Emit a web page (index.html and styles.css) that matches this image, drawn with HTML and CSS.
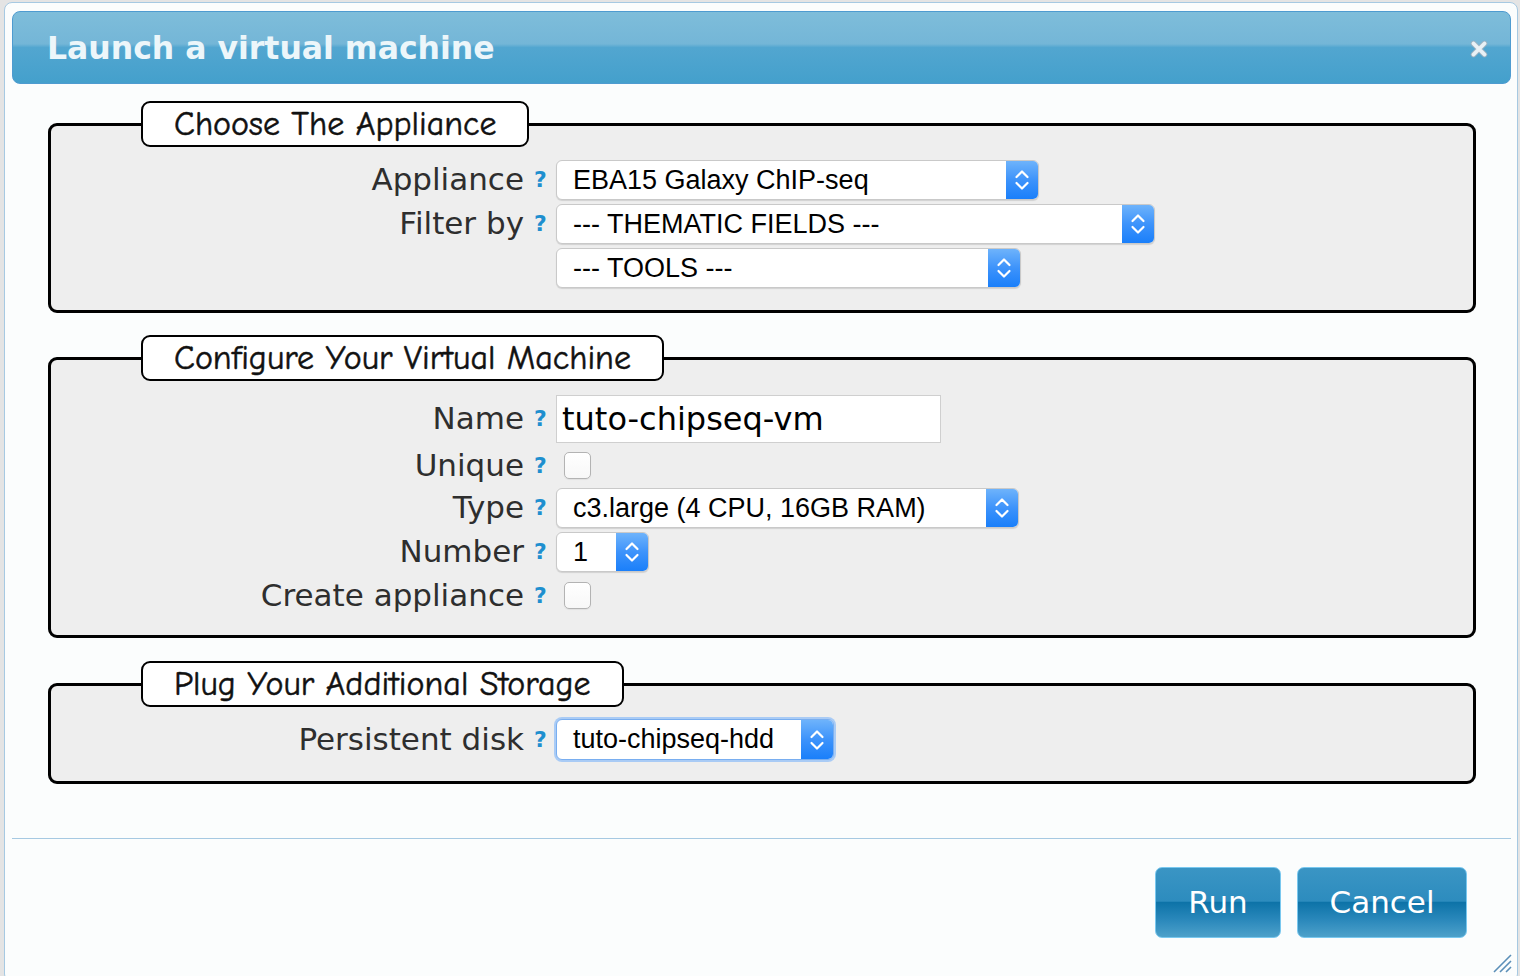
FILE: index.html
```html
<!DOCTYPE html>
<html>
<head>
<meta charset="utf-8">
<title>Launch a virtual machine</title>
<link rel="stylesheet" href="styles.css">
</head>
<body>
<div class="dialog">
  <div class="titlebar">
    <span class="title">Launch a virtual machine</span>
    <svg class="close" width="18" height="18" viewBox="0 0 18 18">
      <path d="M3.5 3.5 L14.5 14.5 M14.5 3.5 L3.5 14.5" stroke="#9fb4c2" stroke-width="5.4" stroke-linecap="round"/>
      <path d="M3.5 3.5 L14.5 14.5 M14.5 3.5 L3.5 14.5" stroke="#e9f1f6" stroke-width="3.8" stroke-linecap="round"/>
    </svg>
  </div>

  <fieldset class="group group-appliance">
    <legend>Choose The Appliance</legend>
    <div class="row">
      <span class="label">Appliance</span><span class="help">?</span>
      <div class="select w-appliance"><span class="value">EBA15 Galaxy ChIP-seq</span><span class="arrow"><svg width="16" height="24" viewBox="0 0 16 24"><path d="M2.5 9 L8 3.5 L13.5 9 M2.5 15 L8 20.5 L13.5 15" fill="none" stroke="#fff" stroke-width="2.2" stroke-linecap="round" stroke-linejoin="round"/></svg></span></div>
    </div>
    <div class="row">
      <span class="label">Filter by</span><span class="help">?</span>
      <div class="select w-thematic"><span class="value">--- THEMATIC FIELDS ---</span><span class="arrow"><svg width="16" height="24" viewBox="0 0 16 24"><path d="M2.5 9 L8 3.5 L13.5 9 M2.5 15 L8 20.5 L13.5 15" fill="none" stroke="#fff" stroke-width="2.2" stroke-linecap="round" stroke-linejoin="round"/></svg></span></div>
    </div>
    <div class="row">
      <span class="label"></span><span class="help blank"></span>
      <div class="select w-tools"><span class="value">--- TOOLS ---</span><span class="arrow"><svg width="16" height="24" viewBox="0 0 16 24"><path d="M2.5 9 L8 3.5 L13.5 9 M2.5 15 L8 20.5 L13.5 15" fill="none" stroke="#fff" stroke-width="2.2" stroke-linecap="round" stroke-linejoin="round"/></svg></span></div>
    </div>
  </fieldset>

  <fieldset class="group group-vm">
    <legend>Configure Your Virtual Machine</legend>
    <div class="row row-name">
      <span class="label">Name</span><span class="help">?</span>
      <input class="text" type="text" value="tuto-chipseq-vm">
    </div>
    <div class="row row-unique">
      <span class="label">Unique</span><span class="help">?</span>
      <span class="checkbox"></span>
    </div>
    <div class="row">
      <span class="label">Type</span><span class="help">?</span>
      <div class="select w-type"><span class="value">c3.large (4 CPU, 16GB RAM)</span><span class="arrow"><svg width="16" height="24" viewBox="0 0 16 24"><path d="M2.5 9 L8 3.5 L13.5 9 M2.5 15 L8 20.5 L13.5 15" fill="none" stroke="#fff" stroke-width="2.2" stroke-linecap="round" stroke-linejoin="round"/></svg></span></div>
    </div>
    <div class="row">
      <span class="label">Number</span><span class="help">?</span>
      <div class="select w-number"><span class="value">1</span><span class="arrow"><svg width="16" height="24" viewBox="0 0 16 24"><path d="M2.5 9 L8 3.5 L13.5 9 M2.5 15 L8 20.5 L13.5 15" fill="none" stroke="#fff" stroke-width="2.2" stroke-linecap="round" stroke-linejoin="round"/></svg></span></div>
    </div>
    <div class="row row-create">
      <span class="label">Create appliance</span><span class="help">?</span>
      <span class="checkbox"></span>
    </div>
  </fieldset>

  <fieldset class="group group-storage">
    <legend>Plug Your Additional Storage</legend>
    <div class="row row-disk">
      <span class="label">Persistent disk</span><span class="help">?</span>
      <div class="select w-disk focused"><span class="value">tuto-chipseq-hdd</span><span class="arrow"><svg width="16" height="24" viewBox="0 0 16 24"><path d="M2.5 9 L8 3.5 L13.5 9 M2.5 15 L8 20.5 L13.5 15" fill="none" stroke="#fff" stroke-width="2.2" stroke-linecap="round" stroke-linejoin="round"/></svg></span></div>
    </div>
  </fieldset>

  <div class="divider"></div>

  <div class="buttons">
    <button class="btn btn-run">Run</button>
    <button class="btn btn-cancel">Cancel</button>
  </div>

  <svg class="resize" width="22" height="22" viewBox="0 0 22 22">
    <path d="M21 4 L4 21 M21 10 L10 21 M21 16 L16 21" stroke="#5b8fb8" stroke-width="1.6"/>
  </svg>
</div>
</body>
</html>
```

FILE: styles.css
```css
html, body {
  margin: 0;
  padding: 0;
}

body {
  background: #e4e4e4;
  font-family: "DejaVu Sans", "Liberation Sans", sans-serif;
  padding: 2px 0 0 4px;
  height: 976px;
  box-sizing: border-box;
  overflow: hidden;
}

.dialog {
  position: relative;
  box-sizing: border-box;
  width: 1514px;
  height: 980px;
  background: #fbfdfd;
  border: 1px solid #a6c9e2;
  border-radius: 8px;
  padding: 8px 6px 0 7px;
}

.titlebar {
  box-sizing: border-box;
  height: 73px;
  border: 1px solid #4e9bd0;
  border-radius: 8px;
  background: linear-gradient(to bottom, #7ebdda 0%, #74b6d7 45%, #52a6d0 50%, #44a0cc 100%);
  display: flex;
  align-items: center;
  justify-content: space-between;
  padding: 0 22px 0 34px;
}

.title {
  font-family: "DejaVu Sans", sans-serif;
  font-weight: bold;
  font-size: 31.5px;
  color: #ecf6fa;
}

.close {
  display: block;
  margin-top: 2px;
}

.group {
  margin: 17px 35px 0 36px;
  padding: 13px 0 22px 0;
  border: 3px solid #000;
  border-radius: 9px;
  background: #eeeeee;
  min-width: 0;
}

.group-vm {
  margin-top: 22px;
  padding: 14px 0 20px 0;
}

.group-storage {
  margin-top: 23px;
  padding: 12px 0 21px 0;
}

legend {
  box-sizing: border-box;
  height: 46px;
  margin-left: 90px;
  padding: 0 31px 0 31px;
  border: 2px solid #000;
  border-radius: 9px;
  background: #fff;
  font-family: "Comic Sans MS", "Comic Neue", cursive;
  font-size: 34px;
  line-height: 42px;
  color: #111;
  -webkit-text-stroke: 0.5px #111;
  white-space: nowrap;
}

.row {
  display: flex;
  align-items: center;
  height: 40px;
  margin-bottom: 4px;
}

.row:last-child {
  margin-bottom: 0;
}

.row-name {
  height: 48px;
}

.row-unique {
  height: 37px;
}

.row-create {
  height: 39px;
}

.row-disk {
  height: 41px;
}

.label {
  width: 473px;
  flex: none;
  text-align: right;
  font-size: 31px;
  color: #2e2e2e;
  white-space: nowrap;
  margin-top: -2px;
}

.help {
  width: 12px;
  flex: none;
  margin: 0 10px;
  font-weight: bold;
  font-size: 22px;
  color: #1e8fcf;
  text-align: center;
  line-height: 1;
}

.select {
  box-sizing: border-box;
  height: 40px;
  display: flex;
  align-items: stretch;
  background: #fff;
  border: 1px solid #c9c9c9;
  border-radius: 6px;
  box-shadow: 0 1px 1px rgba(0, 0, 0, 0.12);
  overflow: hidden;
}

.select .value {
  flex: 1;
  padding-left: 16px;
  font-family: "Liberation Sans", Arial, sans-serif;
  font-size: 27px;
  line-height: 38px;
  color: #000;
  white-space: nowrap;
}

.select .arrow {
  width: 32px;
  flex: none;
  display: flex;
  align-items: center;
  justify-content: center;
  background: linear-gradient(to bottom, #6eb3fb 0%, #3d93fb 50%, #1a7ffa 100%);
}

.w-appliance { width: 483px; }
.w-thematic { width: 599px; }
.w-tools { width: 465px; }
.w-type { width: 463px; }
.w-number { width: 93px; }
.w-disk { width: 278px; height: 41px; }

.focused {
  border-color: #79aef0;
  box-shadow: 0 0 0 2px #a9cbf5;
}

.text {
  box-sizing: border-box;
  width: 385px;
  height: 48px;
  margin: 0;
  border: 1px solid #cfcfcf;
  background: #fff;
  padding: 0 5px;
  font-family: "DejaVu Sans", sans-serif;
  font-size: 32px;
  color: #000;
  outline: none;
}

.checkbox {
  box-sizing: border-box;
  width: 27px;
  height: 27px;
  margin-left: 8px;
  border: 1px solid #b3b3b3;
  border-radius: 5px;
  background: linear-gradient(to bottom, #ffffff, #f7f7f7);
  box-shadow: 0 1px 1px rgba(0, 0, 0, 0.06);
}

.divider {
  height: 1px;
  background: #a6c9e2;
  margin-top: 54px;
}

.buttons {
  display: flex;
  justify-content: flex-end;
  gap: 16px;
  margin: 28px 44px 0 0;
}

.btn {
  box-sizing: border-box;
  height: 71px;
  padding: 0;
  border: 1px solid #79c8ef;
  border-radius: 7px;
  background: linear-gradient(to bottom, #3a95c4 0%, #2d8cbe 48%, #0d73a8 50%, #2a88bb 75%, #4da1ca 100%);
  color: #fff;
  font-family: "DejaVu Sans", sans-serif;
  font-size: 31px;
  line-height: 1;
  cursor: pointer;
}

.btn-run { width: 126px; }
.btn-cancel { width: 170px; }

.resize {
  position: absolute;
  right: 5px;
  bottom: 8px;
}
```
